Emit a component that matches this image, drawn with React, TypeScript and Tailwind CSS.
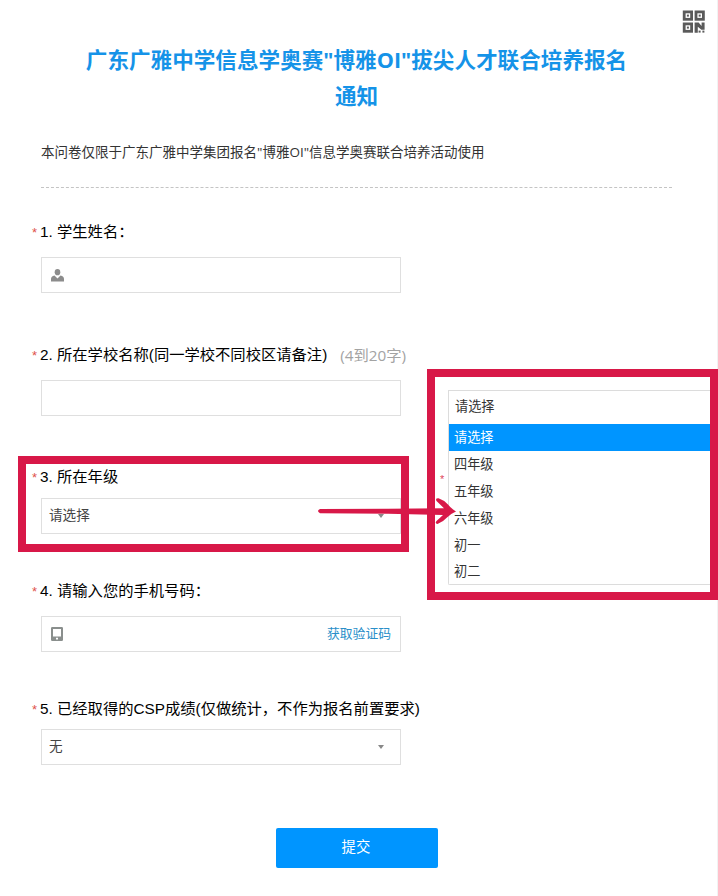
import type { ReactNode } from "react";

const grades = ["四年级", "五年级", "六年级", "初一", "初二"];

const Field = ({
  label,
  hint,
  className,
  children,
}: {
  label: string;
  hint?: string;
  className: string;
  children?: ReactNode;
}) => {
  return (
    <div className={`flex flex-col ${className}`}>
      <div className="-ml-[9px] flex h-5 items-center whitespace-nowrap text-[15.3px] leading-5 text-black">
        <span className="w-[9px] pt-[2px] text-[13px] text-[#e0524c]">*</span>
        <span className="-ml-px">{label}</span>
        {hint && (
          <span className="ml-[13px] font-['Open_Sans','Noto_Sans_CJK_SC',sans-serif] text-[#a3a3a3]">
            {hint}
          </span>
        )}
      </div>
      <div className="flex h-9 w-[360px] items-center border border-[#dfdfdf] bg-white pr-[9px] pl-[7px] text-[13.6px] text-[#444]">
        {children}
      </div>
    </div>
  );
};

const Caret = () => (
  <svg className="mr-[7px] ml-auto h-1 w-[6px]" viewBox="0 0 6 4">
    <path d="M0 0h6L3 4z" fill="#888" />
  </svg>
);

const QrIcon = () => (
  <svg className="h-[23px] w-[23px]" viewBox="0 0 23 23" fill="none">
    <g stroke="#5a5a5a" strokeWidth="2.8">
      <rect x="2.2" y="1.9" width="7.4" height="7.4" />
      <rect x="14" y="1.9" width="7.4" height="7.4" />
      <rect x="2.2" y="13.9" width="7.4" height="7.4" />
    </g>
    <g fill="#5a5a5a">
      <rect x="4.9" y="4.6" width="2" height="2" />
      <rect x="16.7" y="4.6" width="2" height="2" />
      <rect x="4.9" y="16.6" width="2" height="2" />
      <path d="M12.6 12.5h4l3 3.500v-3.500h3v7.200h-3.200l-3.600-3v6h-3.200z" />
      <rect x="16.600" y="20.600" width="2" height="2" />
      <rect x="20.400" y="20.600" width="2" height="2" />
    </g>
  </svg>
);

const App = () => {
  return (
    <div className="relative h-[896px] w-[718px] overflow-hidden bg-white font-['Liberation_Sans','Noto_Sans_CJK_SC',sans-serif]">
      <div className="absolute inset-y-0 right-0 w-px bg-[#f1f3f3]" />
      <div className="absolute top-[10px] left-[682px]">
        <QrIcon />
      </div>

      <div className="flex flex-col pl-[41px]">
        <h1 className="mt-[42px] w-[631px] text-center font-['Open_Sans','Noto_Sans_CJK_SC',sans-serif] text-[21.6px] leading-9 font-bold text-[#1593e8]">
          广东广雅中学信息学奥赛"博雅OI"拔尖人才联合培养报名
          <br />
          通知
        </h1>
        <p className="mt-[28px] h-5 font-['Open_Sans','Noto_Sans_CJK_SC',sans-serif] text-[13.5px] leading-5 whitespace-nowrap text-[#333]">
          本问卷仅限于广东广雅中学集团报名"博雅OI"信息学奥赛联合培养活动使用
        </p>
        <div className="mt-[25px] w-[631px] border-t border-dashed border-[#c4c4c4]" />

        <Field label="1. 学生姓名：" className="mt-[34px] gap-[15px]">
          <svg className="ml-[2px] h-[13px] w-[13px]" viewBox="0 0 13 13" fill="#8c8c8c">
            <ellipse cx="6.5" cy="3.200" rx="2.800" ry="3.100" />
            <path d="M0 12.500V10Q0 7.200 3.500 6.600L6.500 9.600 9.500 6.600Q13 7.200 13 10v2.500z" />
          </svg>
        </Field>

        <Field
          label="2. 所在学校名称(同一学校不同校区请备注)"
          hint="(4到20字)"
          className="mt-[52px] gap-[15px]"
        />

        <Field label="3. 所在年级" className="mt-[51px] gap-[11px]">
          请选择
          <Caret />
        </Field>

        <Field label="4. 请输入您的手机号码：" className="mt-[47px] gap-[15px]">
          <svg className="ml-[2px] h-[14px] w-3" viewBox="0 0 12 14">
            <path
              fillRule="evenodd"
              fill="#8a8f8d"
              d="M1.2 0h9.6Q12 0 12 1.2v11.6q0 1.2-1.2 1.2H1.2Q0 14 0 12.8V1.2Q0 0 1.2 0zM2 2v7.5h8V2zM5 10.8v1.6h2v-1.6z"
            />
          </svg>
          <span className="ml-auto text-[12.8px] text-[#2a8fc9]">获取验证码</span>
        </Field>

        <Field
          label="5. 已经取得的CSP成绩(仅做统计，不作为报名前置要求)"
          className="mt-[47px] gap-[10px]"
        >
          无
          <Caret />
        </Field>

        <button className="mt-[63px] ml-[235px] h-10 w-[162px] rounded-[2px] bg-[#0095ff] pr-[2px] text-[14.4px] text-white">
          提交
        </button>
      </div>

      {/* highlighted question */}
      <div className="absolute top-[456px] left-[18px] h-24 w-[391px] border-8 border-[#d81848]" />

      {/* expanded grade list */}
      <div className="absolute top-[369px] left-[427px] flex h-[231px] w-[291px] border-8 border-[#d81848] bg-white">
        <span className="w-[13px] pt-[94px] pl-[5px] text-[11px] text-[#e0455c]">*</span>
        <div className="mt-[13px] h-[195px] flex-1 rounded-bl-[2px] border border-r-0 border-[#dcdcdc] text-[13.2px] text-[#333]">
          <div className="flex h-[33px] items-center pb-[2px] pl-[6px]">请选择</div>
          <div className="flex h-[27px] items-center bg-[#0095ff] pl-[5px] text-white">
            请选择
          </div>
          {grades.map((grade) => (
            <div key={grade} className="flex h-[26.7px] items-center pt-[2px] pl-[5px]">
              {grade}
            </div>
          ))}
        </div>
      </div>

      <svg
        className="absolute top-[496px] left-[316px] h-[30px] w-[142px]"
        viewBox="0 0 142 30"
        fill="#d81848"
      >
        <path d="M4 13 72 12.800 128 12.200 120.500 5Q119 2 122.500 2.200 128 4 132 8.500 135 12.500 140 15.500 135 17.500 131 21.500 127 26 121.500 28 118.500 27.500 120.500 25L127 19 72 17.800 4 17.200Q0 15 4 13z" />
      </svg>
    </div>
  );
};

export default App;
